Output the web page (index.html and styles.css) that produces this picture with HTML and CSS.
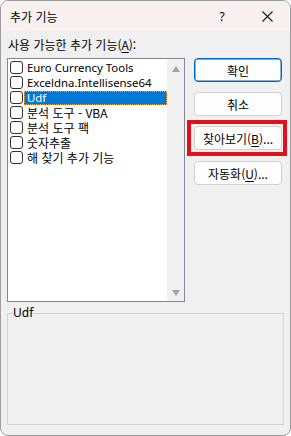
FILE: index.html
```html
<!DOCTYPE html>
<html lang="ko">
<head>
<meta charset="utf-8">
<title>추가 기능</title>
<link rel="stylesheet" href="styles.css">
</head>
<body>
<div class="window">
  <div class="titlebar">
    <span class="title">추가 기능</span>
    <span class="help">?</span>
    <span class="close"><svg width="11" height="11" viewBox="0 0 11 11"><path d="M0.5 0.5 L10.5 10.5 M10.5 0.5 L0.5 10.5" stroke="#1a1a1a" stroke-width="1.1" fill="none"/></svg></span>
  </div>
  <div class="content">
    <div class="main">
      <div class="left">
        <div class="label">사용 가능한 추가 기능(<u>A</u>):</div>
        <div class="listbox">
          <ul class="items">
            <li class="item"><span class="check"></span><span class="text">Euro Currency Tools</span></li>
            <li class="item"><span class="check"></span><span class="text">Exceldna.Intellisense64</span></li>
            <li class="item selected"><span class="check"></span><span class="text">Udf</span></li>
            <li class="item"><span class="check"></span><span class="text ko">분석 도구 - VBA</span></li>
            <li class="item"><span class="check"></span><span class="text ko">분석 도구 팩</span></li>
            <li class="item"><span class="check"></span><span class="text ko">숫자추출</span></li>
            <li class="item"><span class="check"></span><span class="text ko">해 찾기 추가 기능</span></li>
          </ul>
          <div class="scrollbar">
            <span class="arrow up"></span>
            <span class="arrow down"></span>
          </div>
        </div>
      </div>
      <div class="buttons">
        <button class="btn default">확인</button>
        <button class="btn">취소</button>
        <button class="btn marked">찾아보기(<u>B</u>)...</button>
        <button class="btn">자동화(<u>U</u>)...</button>
      </div>
    </div>
    <fieldset class="group">
      <legend class="legend">Udf</legend>
    </fieldset>
  </div>
</div>
</body>
</html>
```
FILE: styles.css
```css
* { box-sizing: border-box; }
html, body { margin: 0; padding: 0; background: #ffffff; }
body {
  font-family: "Segoe UI", "Noto Sans", "Noto Sans CJK KR", sans-serif;
  font-size: 12px;
  color: #000;
}
.window {
  width: 291px;
  height: 436px;
  border: 1px solid #9d9d9d;
  border-radius: 8px;
  background: #f0f0f0;
  overflow: hidden;
}
.titlebar {
  height: 30px;
  background: #f9f1ef;
  display: flex;
  align-items: center;
  position: relative;
}
.title {
  margin-left: 9px;
  font-size: 12px;
  font-family: "Noto Sans CJK KR", sans-serif;
  flex: 1;
}
.help {
  width: 12px;
  text-align: center;
  font-size: 12px;
  margin-right: 34px;
}
.close {
  display: flex;
  margin-right: 17px;
}
.content {
  padding: 6px 0 0 6px;
}
.main {
  display: flex;
}
.left {
  width: 178px;
}
.label {
  height: 16px;
  line-height: 16px;
  margin-left: 1px;
  font-family: "Noto Sans CJK KR", sans-serif;
}
.label u { text-underline-offset: 2px; }
.listbox {
  margin-top: 5px;
  width: 178px;
  height: 244px;
  border: 1px solid #828790;
  background: #fff;
  display: flex;
}
.items {
  list-style: none;
  margin: 0;
  padding: 1px 0 0 0;
  flex: 1;
}
.item {
  height: 15px;
  display: flex;
  align-items: center;
  white-space: nowrap;
}
.check {
  width: 13px;
  height: 13px;
  border: 1px solid #333;
  border-radius: 3px;
  background: #fff;
  margin-left: 2px;
  flex: none;
}
.text {
  margin-left: 1px;
  padding-left: 3px;
  height: 14px;
  line-height: 14px;
  font-size: 11.4px;
  font-family: "Noto Sans", "Noto Sans CJK KR", sans-serif;
}
.text.ko {
  font-size: 12px;
  font-family: "Noto Sans CJK KR", sans-serif;
}
.selected .text {
  flex: 1;
  background: #0078d7;
  color: #fff;
  outline: 1px dotted #f0a040;
  outline-offset: -1px;
}
.scrollbar {
  width: 17px;
  background: #f0f0f0;
  display: flex;
  flex-direction: column;
  justify-content: space-between;
  align-items: center;
  padding: 7px 0 5px;
}
.arrow {
  width: 0;
  height: 0;
  border-left: 4px solid transparent;
  border-right: 4px solid transparent;
}
.arrow.up { border-bottom: 6px solid #a3a3a3; }
.arrow.down { border-top: 6px solid #a3a3a3; }
.buttons {
  margin-left: 9px;
  margin-top: 21px;
  display: flex;
  flex-direction: column;
  gap: 10px;
}
.btn {
  width: 88px;
  height: 24px;
  border: 1px solid #d0d0d0;
  border-radius: 4px;
  background: #fdfdfd;
  font-family: "Noto Sans CJK KR", sans-serif;
  font-size: 12px;
  color: #000;
  padding: 0;
  position: relative;
}
.btn u { text-underline-offset: 2px; }
.btn.default {
  border: 1px solid #0067c0;
  box-shadow: inset 0 0 0 0.5px #0067c0;
}
.btn.marked::after {
  content: "";
  position: absolute;
  left: -8px;
  right: -6px;
  top: -7px;
  bottom: -7px;
  border: 4px solid #e3101c;
}
.btn:last-child { margin-top: 1px; }
.group {
  margin: 3px 0 0 0;
  width: 277px;
  height: 120px;
  border: 1px solid #d5d5d5;
  padding: 0;
}
.legend {
  margin-left: 5px;
  padding: 0;
  line-height: 16px;
  font-family: "Noto Sans", sans-serif;
}
```
